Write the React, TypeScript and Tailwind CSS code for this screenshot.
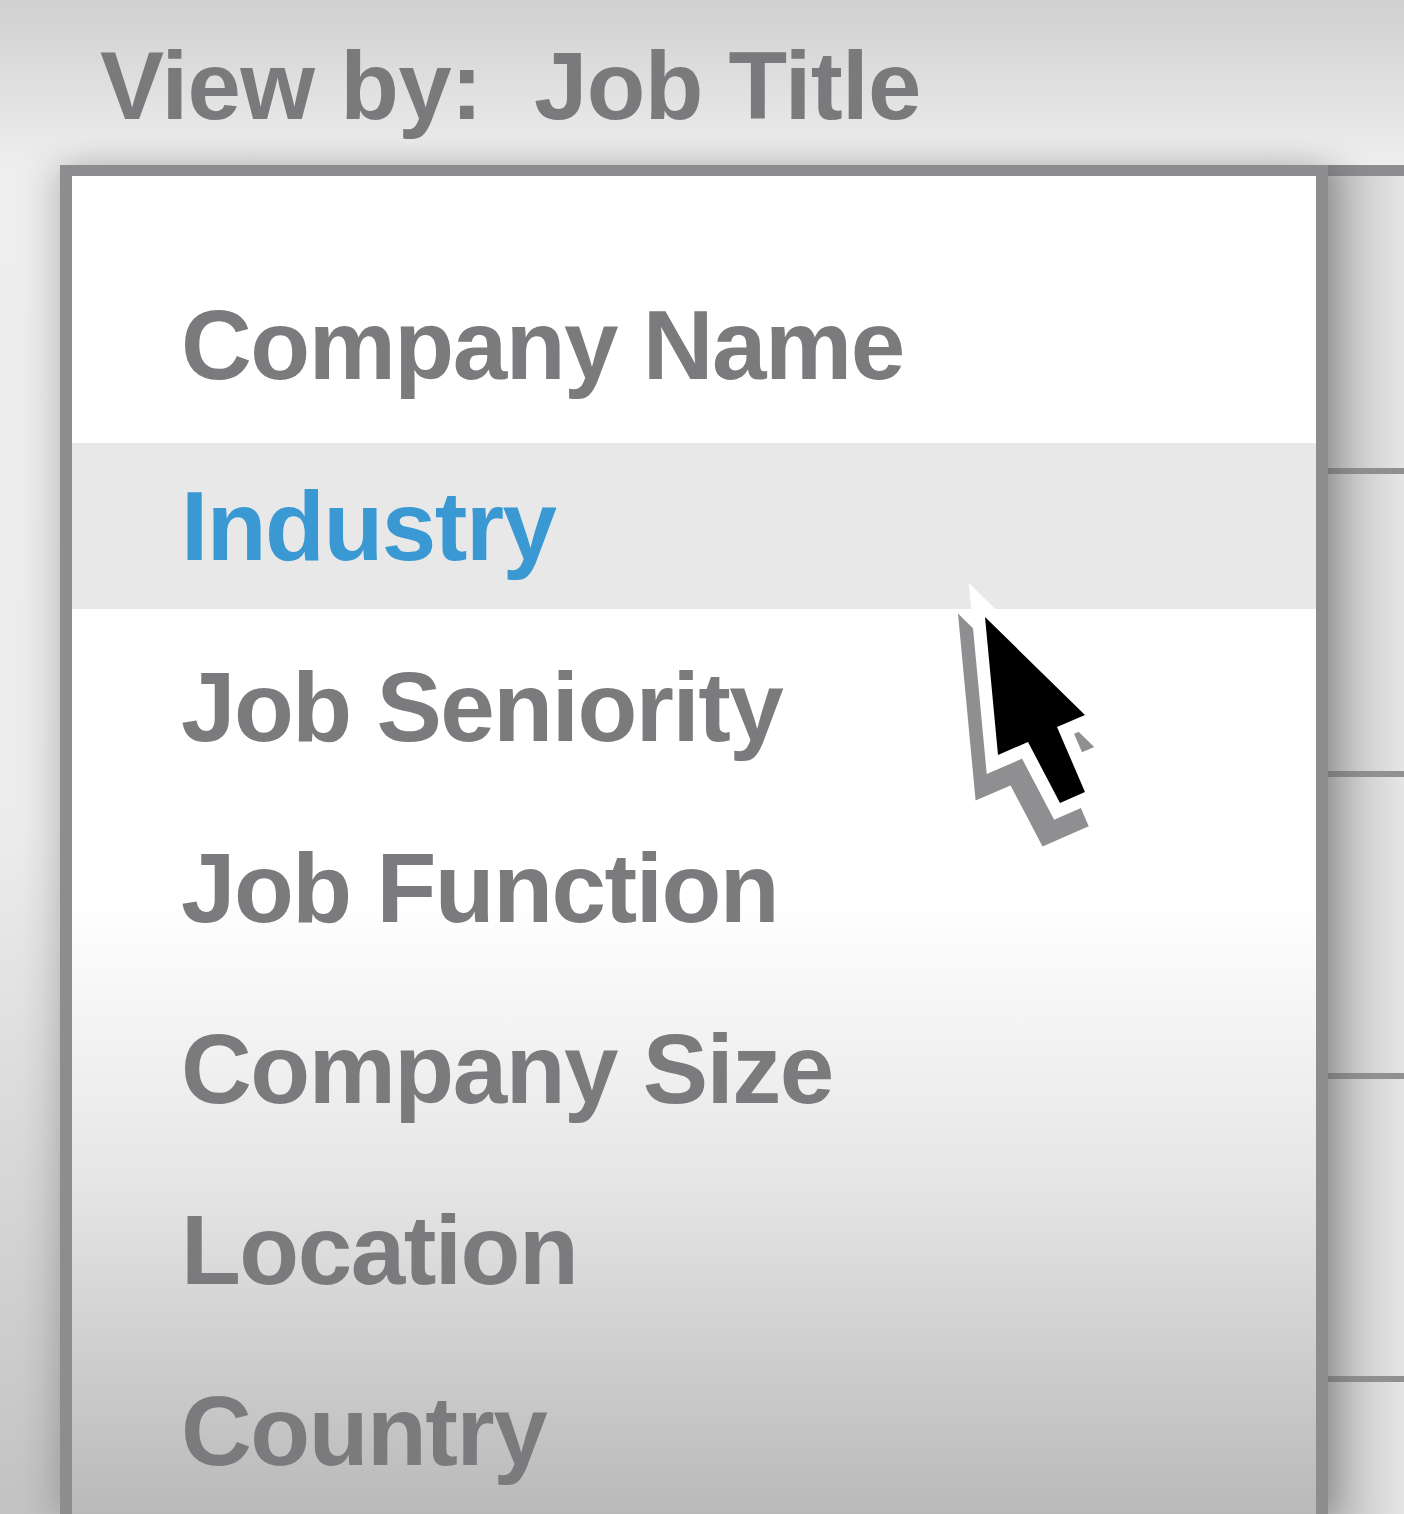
const items = [
  "Company Name",
  "Industry",
  "Job Seniority",
  "Job Function",
  "Company Size",
  "Location",
  "Country",
];

function Cursor() {
  const arrow = "985,617 1085,715 1057,727 1085,792 1060,803 1028,742 998,755";
  return (
    <svg
      className="absolute left-0 top-0 z-20 pointer-events-none"
      width={1404}
      height={1514}
      viewBox="0 0 1404 1514"
    >
      <g transform="translate(-12 28)">
        <polygon points={arrow} fill="#8f8f92" stroke="#8f8f92" strokeWidth={24} strokeLinejoin="miter" />
      </g>
      <polygon points={arrow} fill="#000" stroke="#fff" strokeWidth={26} strokeLinejoin="miter" />
      <polygon points={arrow} fill="#000" />
    </svg>
  );
}

export default function App() {
  return (
    <div
      className="relative w-[1404px] h-[1514px] overflow-hidden bg-[linear-gradient(to_bottom,#d0d0d0_0%,#eeeeee_11%,#ececec_55%,#c2c2c2_100%)]"
      style={{ fontFamily: '"Liberation Sans", Arial, sans-serif' }}
    >
      <div className="h-[165px] pl-[100px] pt-[38px]">
        <h1 className="whitespace-pre text-[96px] leading-none font-bold tracking-[-0.7px] text-[#7a7a7d]">
          View by:  Job Title
        </h1>
      </div>

      <div className="flex h-[1349px]">
        <div className="w-[60px] shrink-0" />

        {/* dropdown */}
        <div className="relative z-10 w-[1268px] shrink-0 border-x-[12px] border-t-[11px] border-[#8d8d90] bg-[linear-gradient(to_bottom,#ffffff_0%,#ffffff_54%,#e6e6e6_75%,#b9b9b9_100%)] shadow-[-14px_0_28px_rgba(0,0,0,0.12),14px_0_28px_rgba(0,0,0,0.18)]">
          <ul className="flex flex-col gap-[15px] pt-[86px]">
            {items.map((item) => {
              const active = item === "Industry";
              return (
                <li
                  key={item}
                  className={
                    active
                      ? "flex h-[166px] items-center bg-[#e8e8e9] pl-[109px]"
                      : "flex h-[166px] items-center pl-[109px]"
                  }
                >
                  <span
                    className={
                      active
                        ? "text-[98px] leading-none font-bold tracking-[-1.5px] text-[#3a99d2]"
                        : "text-[98px] leading-none font-bold tracking-[-1.5px] text-[#7b7b7e]"
                    }
                  >
                    {item}
                  </span>
                </li>
              );
            })}
          </ul>
        </div>

        {/* table behind */}
        <div className="flex flex-1 flex-col border-t-[11px] border-[#8d8d90] bg-[linear-gradient(to_right,#bdbdbd,#e6e6e6)]">
          <div className="h-[298px] shrink-0 border-b-[6px] border-[#909093]" />
          <div className="h-[303px] shrink-0 border-b-[6px] border-[#909093]" />
          <div className="h-[302px] shrink-0 border-b-[6px] border-[#909093]" />
          <div className="h-[303px] shrink-0 border-b-[6px] border-[#909093]" />
          <div className="flex-1" />
        </div>
      </div>

      <Cursor />
    </div>
  );
}
